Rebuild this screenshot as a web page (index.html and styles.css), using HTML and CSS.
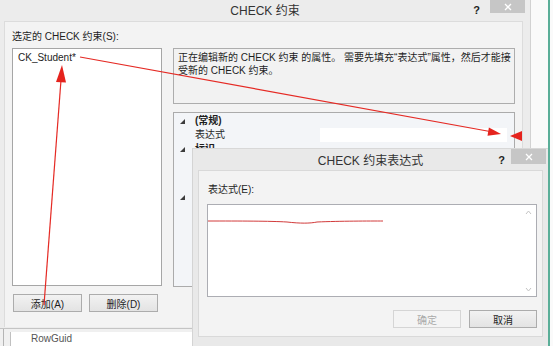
FILE: index.html
```html
<!DOCTYPE html>
<html lang="zh-CN">
<head>
<meta charset="utf-8">
<title>CHECK 约束</title>
<link rel="stylesheet" href="styles.css">
</head>
<body>
<div class="desk">
  <div class="tree">
    <div class="tree-frame">
      <div class="tree-body">RowGuid</div>
    </div>
  </div>
  <div class="edge"></div>

  <div class="win main">
    <div class="titlebar">
      <span class="title">CHECK 约束</span>
      <div class="controls">
        <span class="help">?</span>
        <span class="close"><svg width="8" height="8" viewBox="0 0 8 8"><path d="M1 1L7 7M7 1L1 7" stroke="#fff" stroke-width="1.3"/></svg></span>
      </div>
    </div>
    <div class="panel">
      <div class="label">选定的 CHECK 约束(S):</div>
      <div class="spacer"></div>
      <div class="left">
        <div class="list"><div class="item">CK_Student*</div></div>
        <div class="btnrow">
          <button class="btn">添加(A)</button>
          <button class="btn">删除(D)</button>
        </div>
      </div>
      <div class="right">
        <div class="desc">
          <div class="line">正在编辑新的 CHECK 约束 的属性。 需要先填充“表达式”属性，然后才能接</div>
          <div class="line">受新的 CHECK 约束。</div>
        </div>
        <div class="props">
          <div class="prow cat"><span class="gut"><span class="tri"></span></span><span class="pname">(常规)</span></div>
          <div class="prow"><span class="gut"></span><span class="pname">表达式</span><span class="pval"></span></div>
          <div class="prow cat"><span class="gut"><span class="tri"></span></span><span class="pname">标识</span></div>
          <div class="prow"><span class="gut"></span><span class="pname"></span><span class="pval"></span></div>
          <div class="prow"><span class="gut"></span><span class="pname"></span><span class="pval"></span></div>
          <div class="prow cat low"><span class="gut"><span class="tri"></span></span><span class="pname"></span></div>
        </div>
      </div>
    </div>
  </div>

  <div class="win sub">
    <div class="titlebar sub-title">
      <span class="title">CHECK 约束表达式</span>
      <div class="controls">
        <span class="help">?</span>
        <span class="close"><svg width="8" height="8" viewBox="0 0 8 8"><path d="M1 1L7 7M7 1L1 7" stroke="#fff" stroke-width="1.3"/></svg></span>
      </div>
    </div>
    <div class="subpanel">
      <div class="sublabel">表达式(E):</div>
      <div class="textbox">
        <svg class="scrl" width="7" height="84" viewBox="0 0 7 84"><path d="M1 5L3.5 2L6 5" stroke="#c4c4c4" fill="none"/><path d="M1 79L3.5 82L6 79" stroke="#c4c4c4" fill="none"/></svg>
      </div>
      <div class="subbtns">
        <button class="btn disabled">确定</button>
        <button class="btn">取消</button>
      </div>
    </div>
  </div>

  <svg class="marks" width="553" height="346" viewBox="0 0 553 346">
    <g stroke="#e52a24" stroke-width="1.2" fill="none">
      <line x1="80" y1="57" x2="490" y2="131.5"/>
      <line x1="44" y1="305" x2="61" y2="80"/>
    </g>
    <g fill="#e5231d">
      <polygon points="501,134 487.5,135.8 488.9,127.6"/>
      <polygon points="510,136 522,131 522,141"/>
      <polygon points="62,65 56,82 66,82.5"/>
    </g>
    <path d="M208 221 C240 221 270 221 287 222 C300 223.5 310 223.5 317 222 C340 221 370 221 383 221" stroke="#d23b3b" stroke-width="1" fill="none"/>
  </svg>
</div>
</body>
</html>
```

FILE: styles.css
```css
* { box-sizing: border-box; }
html, body { margin: 0; padding: 0; }
body {
  width: 553px;
  height: 346px;
  overflow: hidden;
  background: #fff;
  font-family: "Liberation Sans", "Noto Sans CJK SC", sans-serif;
  font-size: 10px;
  color: #1e1e1e;
}
.desk {
  position: relative;
  width: 553px;
  height: 346px;
  overflow: hidden;
  background: #fafafa;
}

/* background tree pane */
.tree {
  position: absolute;
  left: 0;
  top: 329px;
  width: 200px;
  height: 17px;
  background: #f0f0f0;
  padding-left: 3px;
}
.tree-frame {
  height: 100%;
  border-left: 1px solid #b4b4b4;
  padding-left: 6px;
  padding-top: 3px;
}
.tree-body {
  height: 100%;
  background: #fff;
  border-left: 1px solid #c0c0c0;
  padding-left: 20px;
  color: #555;
  line-height: 14px;
}
.edge {
  position: absolute;
  left: 548px;
  top: 0;
  width: 2px;
  height: 346px;
  background: #5aae98;
}

/* windows */
.win { position: absolute; }
.main {
  left: 0;
  top: 0;
  width: 531px;
  height: 329px;
  background: #ececec;
  border-right: 1px solid #d2d2d2;
  border-bottom: 1px solid #c4c4c4;
}
.titlebar {
  height: 21px;
  display: grid;
}
.titlebar > * { grid-area: 1 / 1; }
.title {
  justify-self: center;
  align-self: center;
  font-size: 12px;
  color: #333;
  line-height: 14px;
  padding-top: 1px;
}
.controls {
  justify-self: end;
  display: flex;
  align-items: flex-start;
}
.help {
  font-weight: bold;
  font-size: 11px;
  color: #222;
  margin-top: 4px;
  margin-right: 10px;
  line-height: 12px;
}
.close {
  width: 35px;
  height: 13px;
  background: #c6c6c6;
  margin-right: 5px;
  display: flex;
  align-items: center;
  justify-content: center;
}

.panel {
  margin-left: 4px;
  width: 519px;
  height: 306px;
  background: #f3f3f3;
  border-top: 1px solid #dcdcdc;
  border-left: 1px solid #dcdcdc;
  border-right: 1px solid #dcdcdc;
  padding: 9px 0 0 7px;
  display: grid;
  grid-template-columns: 150px 342px;
  grid-template-rows: 17px auto;
  column-gap: 11px;
}
.label { line-height: 12px; white-space: nowrap; }
.left { display: flex; flex-direction: column; }
.list {
  height: 238px;
  background: #fff;
  border: 1px solid #a6a6a6;
  padding: 3px 5px;
}
.item { line-height: 12px; }
.btnrow {
  display: flex;
  gap: 7px;
  margin-top: 8px;
  padding-left: 1px;
}
.btn {
  width: 69px;
  height: 18px;
  padding: 0;
  font-family: "Liberation Sans", "Noto Sans CJK SC", sans-serif;
  font-size: 10px;
  color: #1e1e1e;
  background: linear-gradient(#f2f2f2, #e3e3e3);
  border: 1px solid #acacac;
  border-radius: 0;
}
.btn.disabled {
  background: #f4f4f4;
  border-color: #d5d5d5;
  color: #a9a9a9;
}

.right { display: flex; flex-direction: column; gap: 8px; }
.desc {
  height: 56px;
  border: 1px solid #adadad;
  background: #f2f2f2;
  padding: 2px 4px;
}
.line { line-height: 13px; white-space: nowrap; }

.props {
  height: 175px;
  border: 1px solid #ababab;
  background: #f3f5f8;
  padding-top: 1px;
}
.prow {
  display: grid;
  grid-template-columns: 19px 127px 187px;
  height: 14px;
  align-items: center;
  line-height: 14px;
}
.prow.low { margin-top: 6px; }
.gut { height: 14px; display: flex; align-items: center; padding-left: 6px; }
.tri {
  width: 0;
  height: 0;
  border-left: 5px solid transparent;
  border-bottom: 5px solid #3c3c3c;
}
.pname { padding-left: 2px; white-space: nowrap; }
.cat .pname { font-weight: bold; }
.pval { height: 14px; background: #fff; }

/* sub dialog */
.sub {
  left: 192px;
  top: 148px;
  width: 356px;
  height: 200px;
  background: #e9e9e9;
  border-left: 1px solid #d4d4d4;
  border-top: 1px solid #d8d8d8;
}
.sub-title { height: 21px; }
.sub-title .help { margin-top: 5px; margin-right: 6px; }
.sub-title .close { width: 35px; height: 15px; margin-right: 2px; }
.sub-title .title { padding-top: 3px; }
.subpanel {
  margin: 0 5px;
  height: 167px;
  background: #f3f3f3;
  border: 1px solid #d9d9d9;
  padding: 13px 5px 0 8px;
  display: flex;
  flex-direction: column;
}
.sublabel { line-height: 12px; padding-left: 1px; }
.textbox {
  margin-top: 8px;
  height: 93px;
  background: #fff;
  border: 1px solid #acadb3;
  display: flex;
  justify-content: flex-end;
  padding: 4px 4px 0 0;
}
.subbtns {
  display: flex;
  justify-content: flex-end;
  gap: 8px;
  margin-top: 13px;
}
.subbtns .btn { width: 68px; }

.marks {
  position: absolute;
  left: 0;
  top: 0;
  pointer-events: none;
}
```
